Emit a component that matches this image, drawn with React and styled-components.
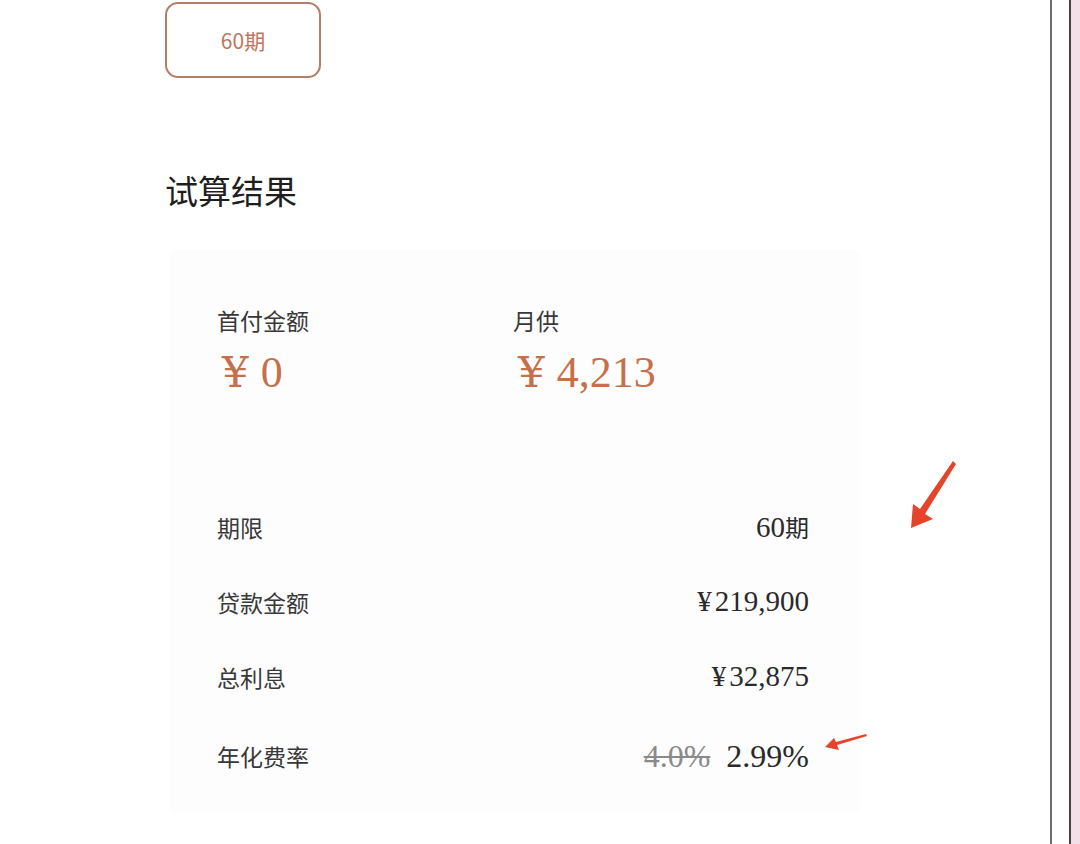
import styled, { createGlobalStyle } from "styled-components";

const GlobalStyle = createGlobalStyle`
  body {
    margin: 0;
    background: #ffffff;
    font-family: "Noto Sans CJK SC", "Noto Sans", sans-serif;
  }
`

const Screen = styled.div`
  display: flex;
  width: 1080px;
  height: 844px;
  overflow: hidden;
`

const Main = styled.div`
  position: relative;
  flex: 1;
  padding-left: 165px;
  border-right: 2px solid #6e6e6e;
  background: #ffffff;
`

const Gutter = styled.div`
  width: 17px;
  background: #ffffff;
  border-right: 2px solid #4a4046;
`

const Edge = styled.div`
  width: 9px;
  background: #f3dfe7;
`

const TermButton = styled.div`
  display: flex;
  align-items: center;
  justify-content: center;
  box-sizing: border-box;
  width: 156px;
  height: 76px;
  margin-top: 2px;
  border: 2px solid #b47d68;
  border-radius: 13px;
  color: #c07560;
  font-size: 21px;
`

const Title = styled.h2`
  margin: 93px 0 0 0;
  font-size: 33px;
  line-height: 38px;
  font-weight: 400;
  color: #1e1e1e;
`

const Card = styled.div`
  box-sizing: border-box;
  width: 690px;
  margin: 41px 0 0 5px;
  padding: 55px 51px 15px 47px;
  background: #fdfdfd;
  border-radius: 6px;
`

const Summary = styled.div`
  display: grid;
  grid-template-columns: 296px 1fr;
`

const SummaryItem = styled.div`
  display: flex;
  flex-direction: column;
  gap: 13px;
`

const Label = styled.span`
  font-size: 23px;
  line-height: 30px;
  color: #383838;
`

const Amount = styled.span`
  padding-left: 5px;
  font-family: "Liberation Serif", "Times New Roman", serif;
  font-size: 44px;
  line-height: 50px;
  color: #c6704b;
`

const BigYen = styled.span`
  margin-right: 12px;
  font-family: "DejaVu Serif", serif;
  font-size: 42px;
  font-weight: 300;
`

const Yen = styled.span`
  margin-right: 3px;
`

const Details = styled.div`
  display: flex;
  flex-direction: column;
  margin-top: 91px;
`

const Row = styled.div`
  display: flex;
  align-items: center;
  justify-content: space-between;
  height: ${(p) => (p.$tall ? 84 : 75)}px;
`

const Value = styled.span`
  display: flex;
  align-items: baseline;
  font-family: "Liberation Serif", "Times New Roman", serif;
  font-size: ${(p) => p.$size || 29}px;
  color: #2a2a2a;
`

const Unit = styled.span`
  font-family: "Noto Sans CJK SC", sans-serif;
  font-size: 24px;
`

const OldRate = styled.span`
  margin-right: 16px;
  color: #8a8a8a;
  text-decoration: line-through;
  text-decoration-thickness: 1.5px;
`

const Arrow = styled.svg`
  position: absolute;
  left: ${(p) => p.$x}px;
  top: ${(p) => p.$y}px;
`

const rows = [
  { label: "期限", value: <>60<Unit>期</Unit></> },
  { label: "贷款金额", value: <><Yen>¥</Yen>219,900</> },
  { label: "总利息", value: <><Yen>¥</Yen>32,875</> },
]

const App = () => {
  return (
    <Screen>
      <GlobalStyle />
      <Main>
        <TermButton>60期</TermButton>
        <Title>试算结果</Title>

        <Card>
          <Summary>
            <SummaryItem>
              <Label>首付金额</Label>
              <Amount><BigYen>¥</BigYen>0</Amount>
            </SummaryItem>
            <SummaryItem>
              <Label>月供</Label>
              <Amount><BigYen>¥</BigYen>4,213</Amount>
            </SummaryItem>
          </Summary>

          <Details>
            {rows.map((r) => (
              <Row key={r.label}>
                <Label>{r.label}</Label>
                <Value>{r.value}</Value>
              </Row>
            ))}
            <Row $tall>
              <Label>年化费率</Label>
              <Value $size={32}>
                <OldRate>4.0%</OldRate>2.99%
              </Value>
            </Row>
          </Details>
        </Card>

        <Arrow $x={905} $y={458} width="56" height="76" viewBox="0 0 56 76">
          <path d="M48 3 L51 6 L20 56 L28 61 L6 70 L8 46 L15 51 Z" fill="#e5432a" />
        </Arrow>
        <Arrow $x={822} $y={730} width="50" height="22" viewBox="0 0 50 22">
          <path d="M44 4 L45 6 L15 15 L17 20 L3 17 L12 8 L14 12 Z" fill="#e5432a" />
        </Arrow>
      </Main>
      <Gutter />
      <Edge />
    </Screen>
  );
}

export default App;
